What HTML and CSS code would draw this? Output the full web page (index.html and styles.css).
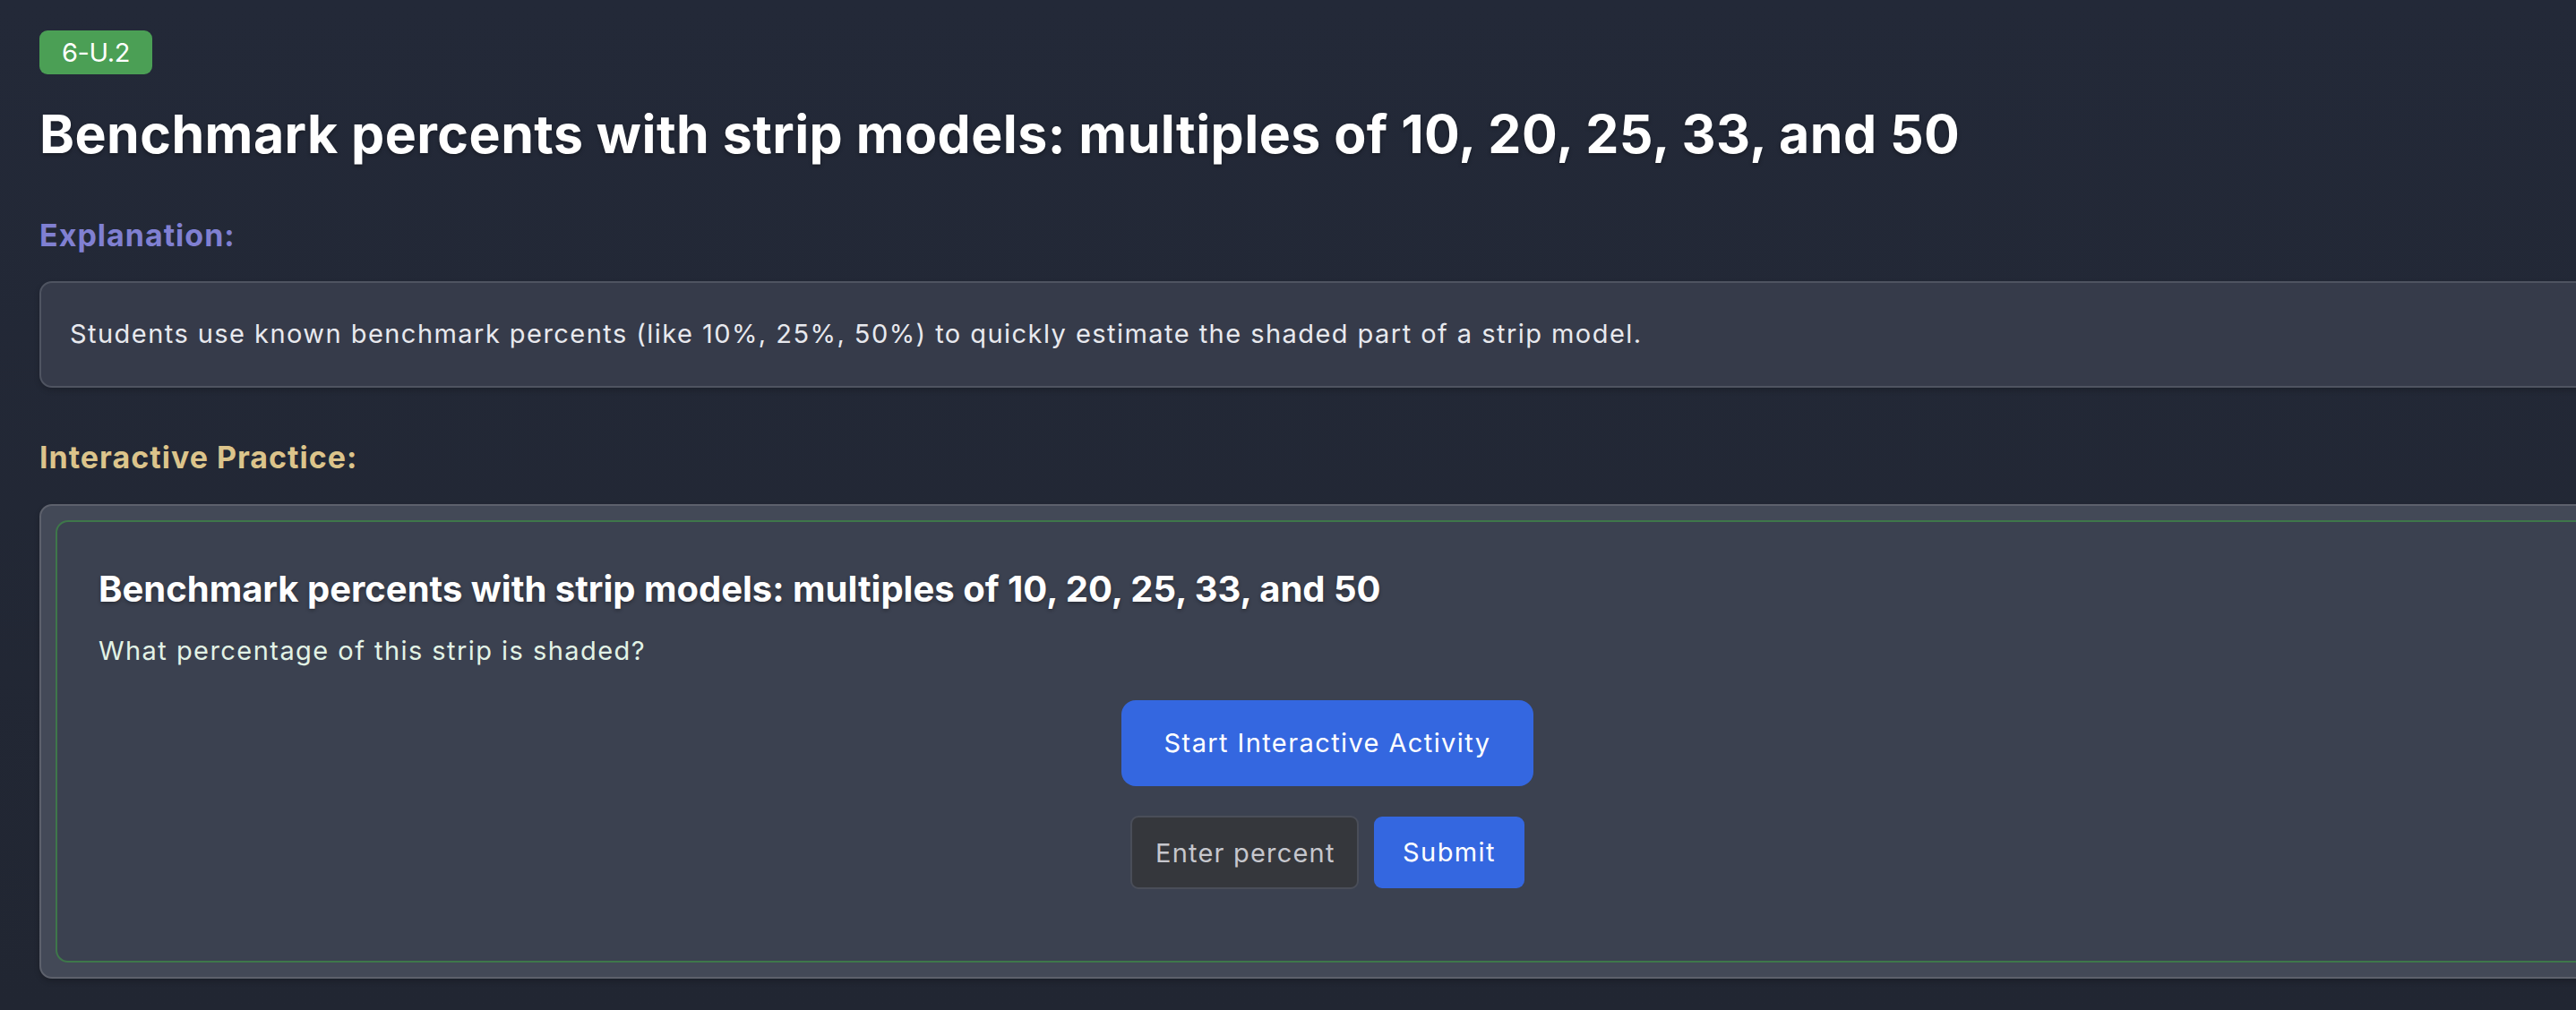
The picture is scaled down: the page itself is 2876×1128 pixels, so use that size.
FILE: index.html
```html
<!DOCTYPE html>
<html lang="en">
<head>
<meta charset="utf-8">
<title>Benchmark percents with strip models</title>
<link rel="stylesheet" href="styles.css">
</head>
<body>
<div class="page">
  <span class="badge">6-U.2</span>
  <h1 class="title">Benchmark percents with strip models: multiples of 10, 20, 25, 33, and 50</h1>

  <h3 class="section-label explanation-label">Explanation:</h3>
  <div class="explanation">Students use known benchmark percents (like 10%, 25%, 50%) to quickly estimate the shaded part of a strip model.</div>

  <h3 class="section-label practice-label">Interactive Practice:</h3>
  <div class="practice">
    <div class="activity">
      <h4 class="activity-title">Benchmark percents with strip models: multiples of 10, 20, 25, 33, and 50</h4>
      <p class="question">What percentage of this strip is shaded?</p>
      <div class="controls">
        <button class="start-btn" type="button">Start Interactive Activity</button>
        <div class="answer-row">
          <input class="answer-input" type="text" placeholder="Enter percent">
          <button class="submit-btn" type="button">Submit</button>
        </div>
      </div>
    </div>
  </div>
</div>
</body>
</html>
```
FILE: styles.css
```css
html, body {
  margin: 0;
  padding: 0;
  overflow: hidden;
}

body {
  background: linear-gradient(180deg, #232938 0%, #212632 100%);
  min-height: 1128px;
  font-family: Inter, "Noto Sans", "Liberation Sans", sans-serif;
  color: #e6e7eb;
}

.page {
  width: 2876px;
  padding: 34px 0 0 44px;
  display: flex;
  flex-direction: column;
  align-items: flex-start;
}

.badge {
  display: block;
  background: #4b9f55;
  color: #ffffff;
  font-size: 29px;
  line-height: 35px;
  font-weight: 400;
  letter-spacing: -0.4px;
  padding: 7px 25px;
  border-radius: 9px;
}

.title {
  margin: 31px 0 0;
  font-size: 59px;
  line-height: 72px;
  font-weight: 700;
  letter-spacing: 0.45px;
  color: #ffffff;
  text-shadow: 0 2px 4px rgba(0, 0, 0, 0.35);
}

.section-label {
  margin: 0;
  font-size: 34px;
  line-height: 41px;
  font-weight: 700;
  letter-spacing: 1px;
}

.explanation-label {
  margin-top: 56px;
  color: #8080d2;
}

.practice-label {
  margin-top: 57px;
  color: #dcc48b;
}

.explanation {
  box-sizing: border-box;
  width: 100%;
  margin-top: 31px;
  padding: 35px 32px 36px;
  background: #363b4a;
  border: 2px solid #4f5461;
  border-radius: 14px;
  font-size: 29px;
  line-height: 44px;
  letter-spacing: 1.45px;
  color: #e8e9ee;
  box-shadow: 0 3px 6px rgba(0, 0, 0, 0.18);
}

.practice {
  box-sizing: border-box;
  width: 100%;
  margin-top: 32px;
  padding: 16px;
  background: #434957;
  border: 2px solid #5d616c;
  border-radius: 14px;
  box-shadow: 0 3px 6px rgba(0, 0, 0, 0.2);
}

.activity {
  background: #3b4150;
  border: 2px solid #3e774a;
  border-radius: 14px;
  padding: 51px 46px 80px;
}

.activity-title {
  margin: 0;
  font-size: 40px;
  line-height: 48px;
  font-weight: 700;
  color: #ffffff;
  text-shadow: 0 2px 4px rgba(0, 0, 0, 0.3);
}

.question {
  margin: 23px 0 0;
  font-size: 29px;
  line-height: 44px;
  letter-spacing: 1.45px;
  color: #e2f3e6;
}

.controls {
  margin-top: 33px;
  display: flex;
  flex-direction: column;
  align-items: center;
  gap: 33px;
}

.start-btn {
  font-family: inherit;
  font-size: 29px;
  line-height: 36px;
  letter-spacing: 1.4px;
  color: #ffffff;
  background: #3467e0;
  border: none;
  border-radius: 16px;
  padding: 30px 48px;
  cursor: pointer;
}

.answer-row {
  display: flex;
  align-items: center;
  gap: 17px;
}

.answer-input {
  box-sizing: border-box;
  width: 255px;
  height: 82px;
  padding: 0 18px 0 26px;
  font-family: inherit;
  font-size: 29px;
  letter-spacing: 1.2px;
  color: #e6e7eb;
  background: #35373c;
  border: 2px solid #4a4e59;
  border-radius: 9px;
  outline: none;
}

.answer-input::placeholder {
  color: #c6c7cd;
  opacity: 1;
}

.submit-btn {
  box-sizing: border-box;
  height: 80px;
  font-family: inherit;
  font-size: 29px;
  line-height: 36px;
  letter-spacing: 1.4px;
  color: #ffffff;
  background: #3467e0;
  border: none;
  border-radius: 9px;
  padding: 0 32px;
  cursor: pointer;
}
```
